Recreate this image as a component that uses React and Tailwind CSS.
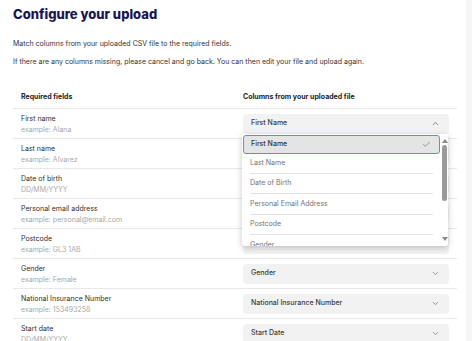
import { ChevronDown, ChevronUp, Check } from "lucide-react";

const fields = [
  { label: "First name", hint: "example: Alana", value: "First Name" },
  { label: "Last name", hint: "example: Alvarez", value: "Last Name" },
  { label: "Date of birth", hint: "DD/MM/YYYY", value: "Date of Birth" },
  { label: "Personal email address", hint: "example: personal@email.com", value: "Personal Email Address" },
  { label: "Postcode", hint: "example: GL3 1AB", value: "Postcode" },
  { label: "Gender", hint: "example: Female", value: "Gender" },
  { label: "National Insurance Number", hint: "example: 153493258", value: "National Insurance Number" },
  { label: "Start date", hint: "DD/MM/YYYY", value: "Start Date" },
];

const options = ["First Name", "Last Name", "Date of Birth", "Personal Email Address", "Postcode", "Gender"];

const Dropdown = () => (
  <div className="absolute left-[-1px] top-[20px] z-10 h-[112px] w-[206px] overflow-hidden rounded-b-[3px] bg-white shadow-[0_2px_6px_rgba(0,0,0,0.22)]">
    <div className="pl-[1px] pr-[8px] pt-[1px]">
      <div className="flex h-[19px] items-center justify-between rounded-[3px] border border-[#5b8def] bg-[#e4e4e4] pl-[7px] pr-[8px] font-medium text-[#333]">
        <span>{options[0]}</span>
        <Check size={9} strokeWidth={1.75} className="text-[#666]" />
      </div>
      {options.slice(1).map((opt, i) => (
        <div
          key={opt}
          className={
            "mx-[7px] flex h-[20.4px] items-center text-[#727272] " +
            (i < options.length - 2 ? "border-b border-[#e2e2e2]" : "")
          }
        >
          {opt}
        </div>
      ))}
    </div>
    {/* scrollbar */}
    <div className="absolute right-0 top-0 flex h-full w-[7px] flex-col items-center bg-white">
      <div className="mt-[5px] h-0 w-0 border-x-[3px] border-b-[4px] border-x-transparent border-b-[#888]" />
      <div className="mt-[2px] h-[56px] w-[5px] rounded-full bg-[#9a9a9a]" />
      <div className="mt-auto mb-[5px] h-0 w-0 border-x-[3px] border-t-[4px] border-x-transparent border-t-[#888]" />
    </div>
  </div>
);

const Row = ({ field, open }) => (
  <div className="flex h-[30px] border-b border-[#e8e8e8]">
    <div className="flex w-[222px] flex-col justify-center pl-2 leading-[11px]">
      <span className="text-[#2e2e2e]">{field.label}</span>
      <span className="text-[#a8a8a8]">{field.hint}</span>
    </div>
    <div className="flex flex-1 items-center px-2">
      <div className="relative w-full">
        <div className="flex h-[20px] items-center justify-between rounded-[4px] bg-[#f2f2f2] pl-2 pr-[9px] font-medium text-[#3a3a3a]">
          <span>{field.value}</span>
          {open ? (
            <ChevronUp size={9} strokeWidth={2} className="text-[#666]" />
          ) : (
            <ChevronDown size={9} strokeWidth={2} className="text-[#777]" />
          )}
        </div>
        {open && <Dropdown />}
      </div>
    </div>
  </div>
);

export default function App() {
  return (
    <div className="flex h-[341px] w-[472px] overflow-hidden bg-white font-['Inter',sans-serif] text-[7px]">
      <div className="flex-1 px-[13px] pt-[6px]">
        <h1 className="text-[13px] font-extrabold leading-[16px] text-[#1b1550]">Configure your upload</h1>
        <p className="mt-[17px] leading-[10px] text-[#333]">
          Match columns from your uploaded CSV file to the required fields.
        </p>
        <p className="mt-[8px] leading-[10px] text-[#333]">
          If there are any columns missing, please cancel and go back. You can then edit your file and upload again.
        </p>
        <div className="mt-[19px] mr-[-4px]">
          <div className="flex h-[23px] items-center border-b border-[#e8e8e8] font-bold text-[#222]">
            <div className="w-[222px] pl-2">Required fields</div>
            <div className="flex-1 px-2">Columns from your uploaded file</div>
          </div>
          {fields.map((f, i) => (
            <Row key={f.label} field={f} open={i === 0} />
          ))}
        </div>
      </div>
      <div className="w-[6px] bg-[#f6f6f6]" />
    </div>
  );
}
